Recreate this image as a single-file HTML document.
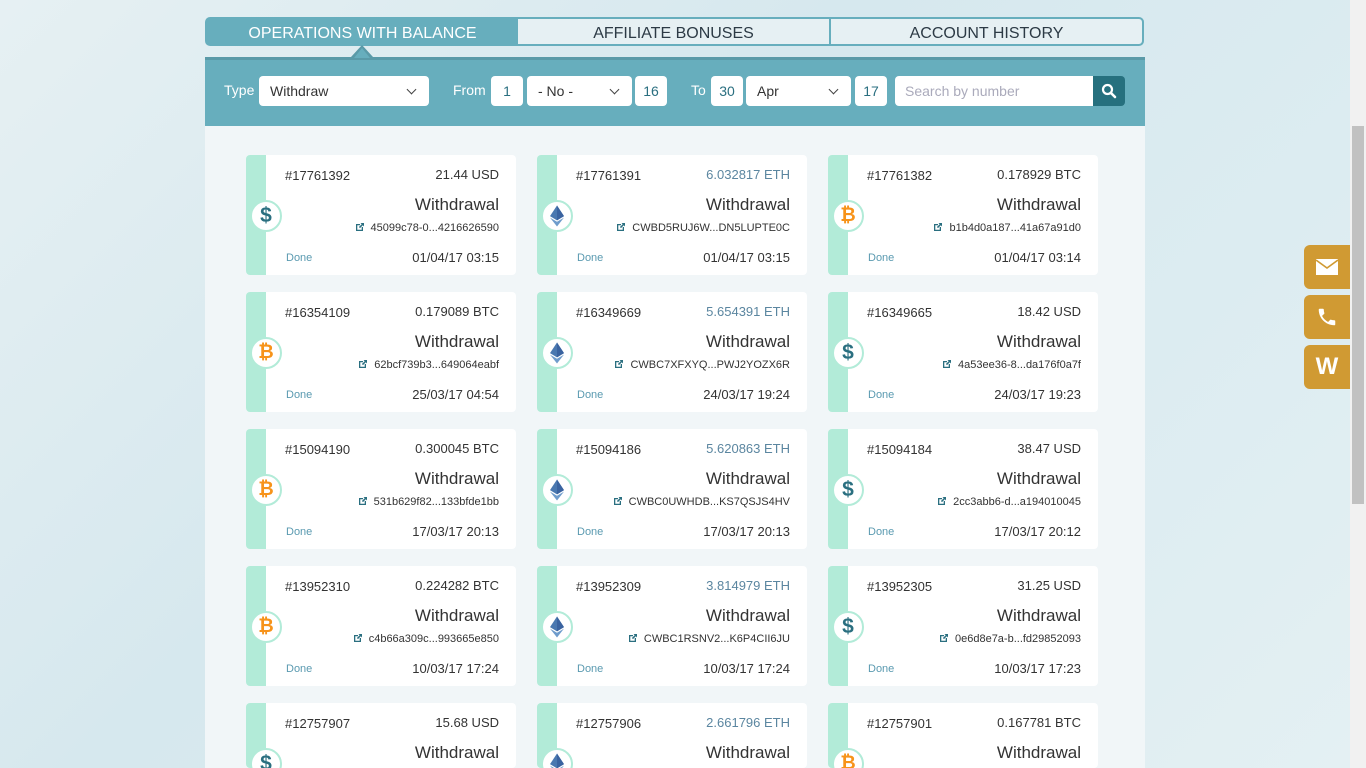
<!DOCTYPE html>
<html style="width:1366px;height:768px;overflow:hidden"><head><meta charset="utf-8"><style>
*{box-sizing:border-box;margin:0;padding:0}
body{width:1366px;height:768px;overflow:hidden;font-family:"Liberation Sans",sans-serif;background:linear-gradient(135deg,#e6f0f3 0%,#d6e8ee 40%,#dcecf1 70%,#e4f0f3 100%);position:relative;color:#333}
.abs{position:absolute}
.tab{position:absolute;top:17px;height:29px;line-height:29px;text-align:center;font-size:16px;color:#2c3a45;background:#e6f0f3;border:2px solid #67aebd}
.bar{position:absolute;left:205px;top:57px;width:940px;height:69px;background:#67aebd;border-top:3px solid #5a9aa8}
.lbl{position:absolute;top:82px;color:#fff;font-size:14px}
.in{position:absolute;top:76px;height:30px;background:#fff;border-radius:4px;font-size:14px;color:#2a6f80;line-height:30px;text-align:center}
.sel{text-align:left;padding-left:11px;color:#333}
.sel:after{content:"";position:absolute;right:14px;top:10px;width:6px;height:6px;border-right:1.5px solid #444;border-bottom:1.5px solid #444;transform:rotate(45deg)}
.main{position:absolute;left:205px;top:126px;width:940px;height:642px;background:#f1f6f8;overflow:hidden}
.card{position:absolute;width:270px;height:120px;background:#fff;border-radius:4px;overflow:hidden}
.strip{position:absolute;left:0;top:0;width:20px;height:120px;background:#b2ebd8}
.ic{position:absolute;left:4px;top:45px;width:32px;height:32px;border-radius:50%;background:#fff;border:2px solid #b2ebd8;text-align:center;line-height:28px;font-weight:bold;font-size:21px}
.usd{color:#2a6f80}.btc{color:#f7931a;font-size:19px}
.id{position:absolute;left:39px;top:13px;font-size:13px;color:#333}
.amt{position:absolute;right:17px;top:12px;font-size:13px;color:#333}
.amt.e{color:#5b86a0}
.wd{position:absolute;right:17px;top:40px;font-size:17px;color:#333}
.hs{position:absolute;right:17px;top:67px;font-size:11px;color:#333}
.hs svg{vertical-align:-1px;margin-right:6px}
.dn{position:absolute;left:40px;top:97px;font-size:11px;color:#5a9ab0}
.dt{position:absolute;right:17px;top:95px;font-size:13px;color:#333}
.side{position:absolute;left:1304px;width:46px;height:44px;background:#d09a33;border-radius:6px 0 0 6px;color:#fff;text-align:center}
</style></head><body>
<div class="tab" style="left:205px;width:315px;background:#67aebd;color:#fff;border-radius:5px 0 0 5px">OPERATIONS WITH BALANCE</div>
<div class="tab" style="left:518px;width:313px;border-left:none">AFFILIATE BONUSES</div>
<div class="tab" style="left:829px;width:315px;border-radius:0 5px 5px 0">ACCOUNT HISTORY</div>
<div class="abs" style="left:351px;top:45px;width:0;height:0;border-left:11px solid transparent;border-right:11px solid transparent;border-bottom:12px solid #5a9aa8"></div>
<div class="bar"></div>
<div class="abs" style="left:354px;top:48px;width:0;height:0;border-left:8px solid transparent;border-right:8px solid transparent;border-bottom:10px solid #67aebd"></div>
<div class="lbl" style="left:224px">Type</div>
<div class="in sel" style="left:259px;width:170px">Withdraw</div>
<div class="lbl" style="left:453px">From</div>
<div class="in" style="left:491px;width:32px">1</div>
<div class="in sel" style="left:527px;width:105px">- No -</div>
<div class="in" style="left:635px;width:32px">16</div>
<div class="lbl" style="left:691px">To</div>
<div class="in" style="left:711px;width:32px">30</div>
<div class="in sel" style="left:746px;width:105px">Apr</div>
<div class="in" style="left:855px;width:32px">17</div>
<div class="in" style="left:895px;width:200px;text-align:left;padding-left:10px;color:#aab;border-radius:4px 0 0 4px">Search by number</div>
<div class="in" style="left:1093px;width:32px;background:#26707e;border-radius:0 4px 4px 0"><svg width="16" height="16" viewBox="0 0 16 16" style="margin-top:7px"><circle cx="6.5" cy="6.5" r="4.5" fill="none" stroke="#fff" stroke-width="2.2"/><path d="M10 10l4 4" stroke="#fff" stroke-width="2.6" stroke-linecap="round"/></svg></div>

<svg width="0" height="0" style="position:absolute"><defs>
<symbol id="eth" viewBox="0 0 16 24"><path d="M8 0L0 12.2 8 17 16 12.2z" fill="#4a78b0"/><path d="M8 0v17L16 12.2z" fill="#3a63a0"/><path d="M0 13.8L8 24l8-10.2L8 18.6z" fill="#6f9ccc"/></symbol>
<symbol id="lnk" viewBox="0 0 10 10"><path d="M1 2h4v1.3H2.3v4.4h4.4V5H8v4H1z" fill="#2a6f80"/><path d="M5.5 1H9v3.5L7.8 3.3 5 6.1 3.9 5l2.8-2.8z" fill="#2a6f80"/></symbol>
</defs></svg>

<div class="main">
<div class="card" style="left:41px;top:29px"><div class="strip"></div><div class="ic usd">$</div><div class="id">#17761392</div><div class="amt">21.44 USD</div><div class="wd">Withdrawal</div><div class="hs"><svg width="10" height="10"><use href="#lnk"/></svg>45099c78-0...4216626590</div><div class="dn">Done</div><div class="dt">01/04/17 03:15</div></div>
<div class="card" style="left:332px;top:29px"><div class="strip"></div><div class="ic"><svg width="14" height="22" style="margin-top:3px"><use href="#eth"/></svg></div><div class="id">#17761391</div><div class="amt e">6.032817 ETH</div><div class="wd">Withdrawal</div><div class="hs"><svg width="10" height="10"><use href="#lnk"/></svg>CWBD5RUJ6W...DN5LUPTE0C</div><div class="dn">Done</div><div class="dt">01/04/17 03:15</div></div>
<div class="card" style="left:623px;top:29px"><div class="strip"></div><div class="ic btc">₿</div><div class="id">#17761382</div><div class="amt">0.178929 BTC</div><div class="wd">Withdrawal</div><div class="hs"><svg width="10" height="10"><use href="#lnk"/></svg>b1b4d0a187...41a67a91d0</div><div class="dn">Done</div><div class="dt">01/04/17 03:14</div></div>

<div class="card" style="left:41px;top:166px"><div class="strip"></div><div class="ic btc">₿</div><div class="id">#16354109</div><div class="amt">0.179089 BTC</div><div class="wd">Withdrawal</div><div class="hs"><svg width="10" height="10"><use href="#lnk"/></svg>62bcf739b3...649064eabf</div><div class="dn">Done</div><div class="dt">25/03/17 04:54</div></div>
<div class="card" style="left:332px;top:166px"><div class="strip"></div><div class="ic"><svg width="14" height="22" style="margin-top:3px"><use href="#eth"/></svg></div><div class="id">#16349669</div><div class="amt e">5.654391 ETH</div><div class="wd">Withdrawal</div><div class="hs"><svg width="10" height="10"><use href="#lnk"/></svg>CWBC7XFXYQ...PWJ2YOZX6R</div><div class="dn">Done</div><div class="dt">24/03/17 19:24</div></div>
<div class="card" style="left:623px;top:166px"><div class="strip"></div><div class="ic usd">$</div><div class="id">#16349665</div><div class="amt">18.42 USD</div><div class="wd">Withdrawal</div><div class="hs"><svg width="10" height="10"><use href="#lnk"/></svg>4a53ee36-8...da176f0a7f</div><div class="dn">Done</div><div class="dt">24/03/17 19:23</div></div>

<div class="card" style="left:41px;top:303px"><div class="strip"></div><div class="ic btc">₿</div><div class="id">#15094190</div><div class="amt">0.300045 BTC</div><div class="wd">Withdrawal</div><div class="hs"><svg width="10" height="10"><use href="#lnk"/></svg>531b629f82...133bfde1bb</div><div class="dn">Done</div><div class="dt">17/03/17 20:13</div></div>
<div class="card" style="left:332px;top:303px"><div class="strip"></div><div class="ic"><svg width="14" height="22" style="margin-top:3px"><use href="#eth"/></svg></div><div class="id">#15094186</div><div class="amt e">5.620863 ETH</div><div class="wd">Withdrawal</div><div class="hs"><svg width="10" height="10"><use href="#lnk"/></svg>CWBC0UWHDB...KS7QSJS4HV</div><div class="dn">Done</div><div class="dt">17/03/17 20:13</div></div>
<div class="card" style="left:623px;top:303px"><div class="strip"></div><div class="ic usd">$</div><div class="id">#15094184</div><div class="amt">38.47 USD</div><div class="wd">Withdrawal</div><div class="hs"><svg width="10" height="10"><use href="#lnk"/></svg>2cc3abb6-d...a194010045</div><div class="dn">Done</div><div class="dt">17/03/17 20:12</div></div>

<div class="card" style="left:41px;top:440px"><div class="strip"></div><div class="ic btc">₿</div><div class="id">#13952310</div><div class="amt">0.224282 BTC</div><div class="wd">Withdrawal</div><div class="hs"><svg width="10" height="10"><use href="#lnk"/></svg>c4b66a309c...993665e850</div><div class="dn">Done</div><div class="dt">10/03/17 17:24</div></div>
<div class="card" style="left:332px;top:440px"><div class="strip"></div><div class="ic"><svg width="14" height="22" style="margin-top:3px"><use href="#eth"/></svg></div><div class="id">#13952309</div><div class="amt e">3.814979 ETH</div><div class="wd">Withdrawal</div><div class="hs"><svg width="10" height="10"><use href="#lnk"/></svg>CWBC1RSNV2...K6P4CII6JU</div><div class="dn">Done</div><div class="dt">10/03/17 17:24</div></div>
<div class="card" style="left:623px;top:440px"><div class="strip"></div><div class="ic usd">$</div><div class="id">#13952305</div><div class="amt">31.25 USD</div><div class="wd">Withdrawal</div><div class="hs"><svg width="10" height="10"><use href="#lnk"/></svg>0e6d8e7a-b...fd29852093</div><div class="dn">Done</div><div class="dt">10/03/17 17:23</div></div>

<div class="card" style="left:41px;top:577px;height:65px"><div class="strip"></div><div class="ic usd">$</div><div class="id">#12757907</div><div class="amt">15.68 USD</div><div class="wd">Withdrawal</div></div>
<div class="card" style="left:332px;top:577px;height:65px"><div class="strip"></div><div class="ic"><svg width="14" height="22" style="margin-top:3px"><use href="#eth"/></svg></div><div class="id">#12757906</div><div class="amt e">2.661796 ETH</div><div class="wd">Withdrawal</div></div>
<div class="card" style="left:623px;top:577px;height:65px"><div class="strip"></div><div class="ic btc">₿</div><div class="id">#12757901</div><div class="amt">0.167781 BTC</div><div class="wd">Withdrawal</div></div>
</div>

<div class="side" style="top:245px"><svg width="22" height="16" viewBox="0 0 22 16" style="margin-top:14px"><rect x="0" y="0" width="22" height="16" fill="#fff"/><path d="M0 1l11 8 11-8" fill="none" stroke="#d09a33" stroke-width="1.6"/></svg></div>
<div class="side" style="top:295px"><svg width="22" height="22" viewBox="0 0 24 24" style="margin-top:11px"><path d="M6.6 10.8c1.4 2.8 3.8 5.1 6.6 6.6l2.2-2.2c.3-.3.7-.4 1-.2 1.1.4 2.300.6 3.6.6.6 0 1 .4 1 1V20c0 .6-.4 1-1 1C10.6 21 3 13.4 3 4c0-.6.4-1 1-1h3.5c.6 0 1 .4 1 1 0 1.3.2 2.5.6 3.6.1.3 0 .7-.2 1z" fill="#fff"/></svg></div>
<div class="side" style="top:345px;font-weight:bold;font-size:24px;line-height:44px">W</div>
<div class="abs" style="left:1350px;top:0;width:16px;height:768px;background:#f1f1f1"></div>
<div class="abs" style="left:1352px;top:126px;width:12px;height:378px;background:#c1c1c1"></div>
</body></html>
